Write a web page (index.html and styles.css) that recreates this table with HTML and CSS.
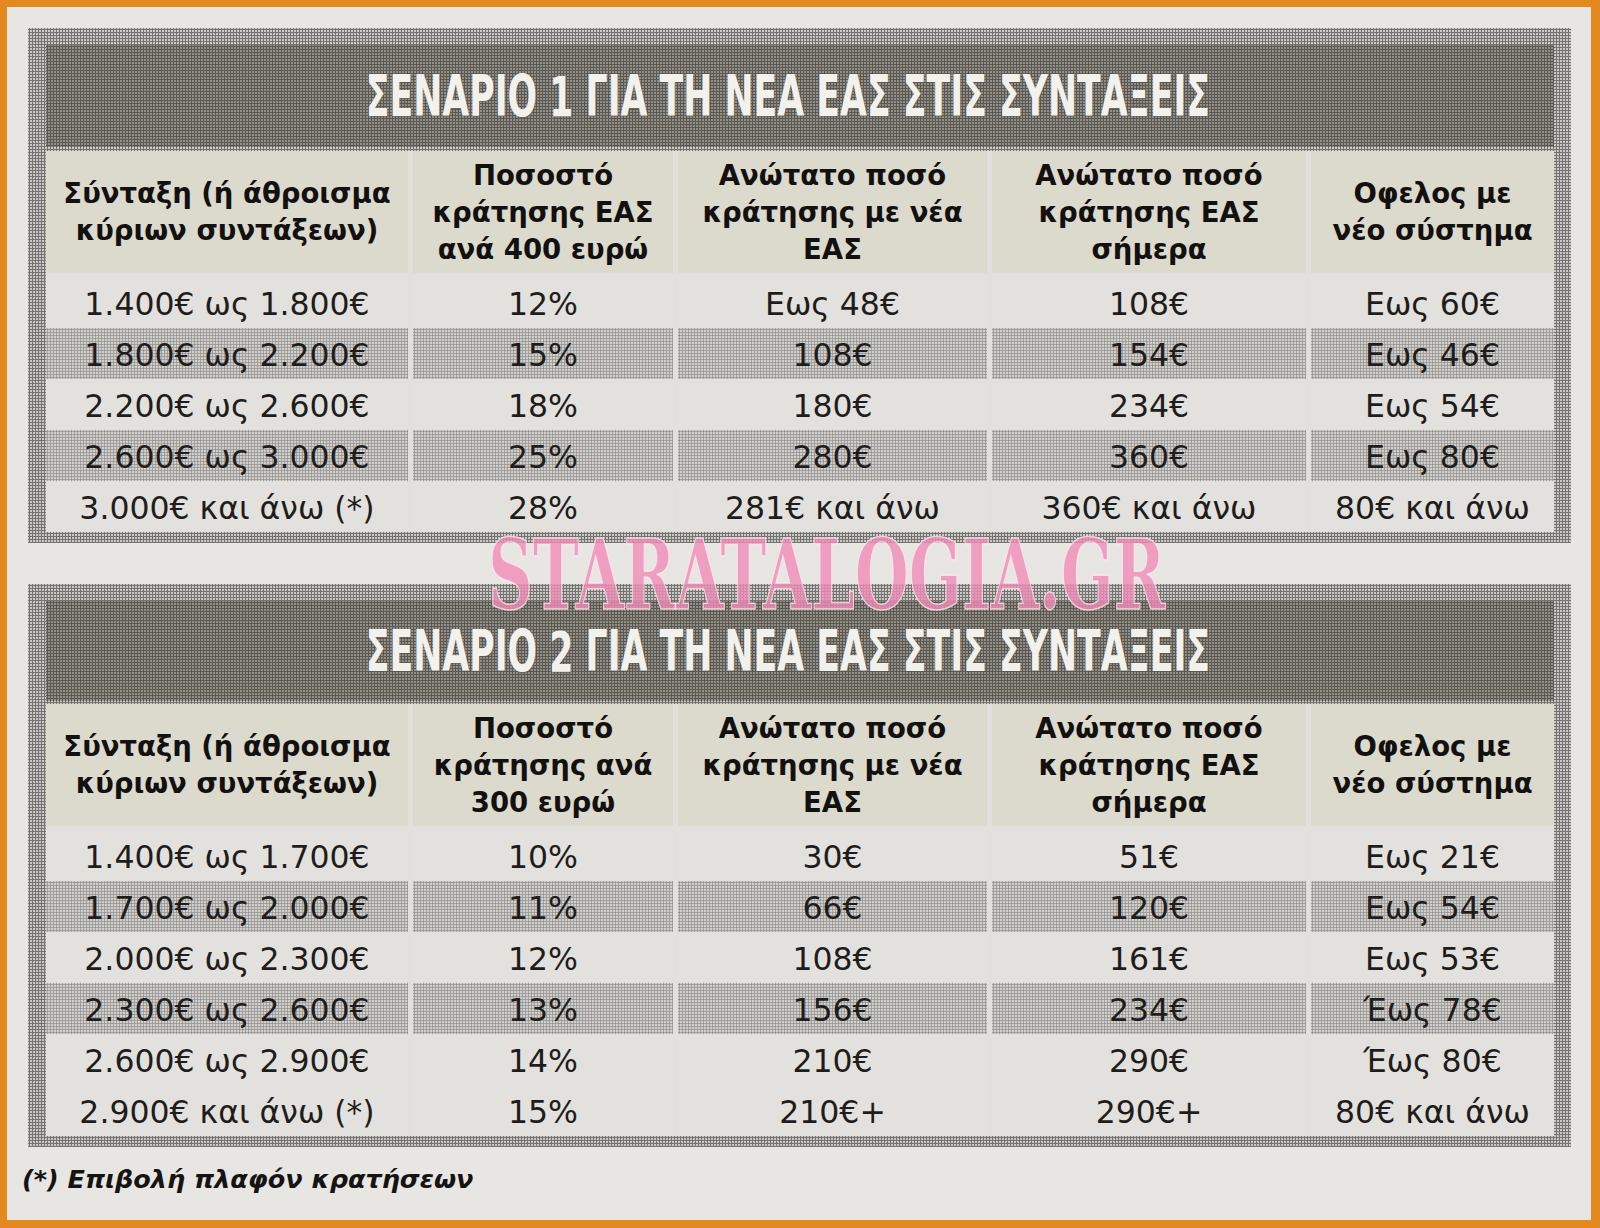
FILE: index.html
```html
<!DOCTYPE html>
<html lang="el">
<head>
<meta charset="utf-8">
<title>Σενάρια για τη νέα ΕΑΣ στις συντάξεις</title>
<link rel="stylesheet" href="styles.css">
</head>
<body>
<div class="page">
  <section class="scenario">
    <div class="title"><span class="title-text">ΣΕΝΑΡΙΟ 1 ΓΙΑ ΤΗ ΝΕΑ ΕΑΣ ΣΤΙΣ ΣΥΝΤΑΞΕΙΣ</span></div>
    <div class="row head">
      <div class="cell">Σύνταξη (ή άθροισμα<br>κύριων συντάξεων)</div>
      <div class="cell">Ποσοστό<br>κράτησης ΕΑΣ<br>ανά 400 ευρώ</div>
      <div class="cell">Ανώτατο ποσό<br>κράτησης με νέα<br>ΕΑΣ</div>
      <div class="cell">Ανώτατο ποσό<br>κράτησης ΕΑΣ<br>σήμερα</div>
      <div class="cell">Οφελος με<br>νέο σύστημα</div>
    </div>
    <div class="row light">
      <div class="cell">1.400€ ως 1.800€</div><div class="cell">12%</div><div class="cell">Εως 48€</div><div class="cell">108€</div><div class="cell">Εως 60€</div>
    </div>
    <div class="row dark">
      <div class="cell">1.800€ ως 2.200€</div><div class="cell">15%</div><div class="cell">108€</div><div class="cell">154€</div><div class="cell">Εως 46€</div>
    </div>
    <div class="row light">
      <div class="cell">2.200€ ως 2.600€</div><div class="cell">18%</div><div class="cell">180€</div><div class="cell">234€</div><div class="cell">Εως 54€</div>
    </div>
    <div class="row dark">
      <div class="cell">2.600€ ως 3.000€</div><div class="cell">25%</div><div class="cell">280€</div><div class="cell">360€</div><div class="cell">Εως 80€</div>
    </div>
    <div class="row light">
      <div class="cell">3.000€ και άνω (*)</div><div class="cell">28%</div><div class="cell">281€ και άνω</div><div class="cell">360€ και άνω</div><div class="cell">80€ και άνω</div>
    </div>
  </section>

  <section class="scenario second">
    <div class="title"><span class="title-text">ΣΕΝΑΡΙΟ 2 ΓΙΑ ΤΗ ΝΕΑ ΕΑΣ ΣΤΙΣ ΣΥΝΤΑΞΕΙΣ</span></div>
    <div class="row head">
      <div class="cell">Σύνταξη (ή άθροισμα<br>κύριων συντάξεων)</div>
      <div class="cell">Ποσοστό<br>κράτησης ανά<br>300 ευρώ</div>
      <div class="cell">Ανώτατο ποσό<br>κράτησης με νέα<br>ΕΑΣ</div>
      <div class="cell">Ανώτατο ποσό<br>κράτησης ΕΑΣ<br>σήμερα</div>
      <div class="cell">Οφελος με<br>νέο σύστημα</div>
    </div>
    <div class="row light">
      <div class="cell">1.400€ ως 1.700€</div><div class="cell">10%</div><div class="cell">30€</div><div class="cell">51€</div><div class="cell">Εως 21€</div>
    </div>
    <div class="row dark">
      <div class="cell">1.700€ ως 2.000€</div><div class="cell">11%</div><div class="cell">66€</div><div class="cell">120€</div><div class="cell">Εως 54€</div>
    </div>
    <div class="row light">
      <div class="cell">2.000€ ως 2.300€</div><div class="cell">12%</div><div class="cell">108€</div><div class="cell">161€</div><div class="cell">Εως 53€</div>
    </div>
    <div class="row dark">
      <div class="cell">2.300€ ως 2.600€</div><div class="cell">13%</div><div class="cell">156€</div><div class="cell">234€</div><div class="cell">Έως 78€</div>
    </div>
    <div class="row light">
      <div class="cell">2.600€ ως 2.900€</div><div class="cell">14%</div><div class="cell">210€</div><div class="cell">290€</div><div class="cell">Έως 80€</div>
    </div>
    <div class="row light">
      <div class="cell">2.900€ και άνω (*)</div><div class="cell">15%</div><div class="cell">210€+</div><div class="cell">290€+</div><div class="cell">80€ και άνω</div>
    </div>
  </section>

  <p class="note">(*) Επιβολή πλαφόν κρατήσεων</p>

  <div class="watermark">STARATALOGIA.GR</div>
</div>
</body>
</html>
```

FILE: styles.css
```css
html, body {
  margin: 0;
  padding: 0;
}

body {
  background: #e7e5e2;
}

.page {
  position: relative;
  width: 1600px;
  height: 1228px;
  box-sizing: border-box;
  border: 7px solid #e3891f;
  border-right-width: 9px;
  border-bottom-width: 8px;
  background: #e8e6e3;
  padding: 21px 20px 0 21px;
  overflow: hidden;
  font-family: "DejaVu Sans", "Noto Sans", sans-serif;
  color: #1e1d1c;
}

.scenario {
  padding: 17px 17px 11px 18px;
  background:
    radial-gradient(circle, rgba(60, 58, 56, 0.6) 1px, transparent 1.4px) 0 0 / 3px 3px,
    #cac8c5;
}

.scenario.second {
  margin-top: 41px;
}

.title {
  height: 102px;
  line-height: 104px;
  text-align: center;
  overflow: hidden;
  margin-bottom: 4px;
  background:
    radial-gradient(circle, rgba(35, 33, 28, 0.5) 1px, transparent 1.4px) 0 0 / 3px 3px,
    #928f88;
}

.second .title {
  height: 100px;
  line-height: 102px;
  margin-bottom: 3px;
}

.title-text {
  display: inline-block;
  font-family: "DejaVu Sans Condensed", "DejaVu Sans", sans-serif;
  font-weight: bold;
  font-size: 56px;
  color: #f3f1ec;
  white-space: nowrap;
  transform: translateX(-12px) scaleX(0.69);
  text-shadow: 1px 1px 0 rgba(90, 88, 84, 0.6);
}

.row {
  display: grid;
  grid-template-columns: 362px 260px 309px 314px 243px;
  column-gap: 5px;
  height: 51px;
  background: #e2e0dc;
}

.row .cell {
  display: flex;
  align-items: center;
  justify-content: center;
  text-align: center;
  font-size: 31.5px;
  padding-top: 2px;
  white-space: nowrap;
}

.row.head {
  height: 122px;
  border-bottom: 4px solid #e2e0dc;
}

.row.head .cell {
  background: #dcd9cd;
  font-weight: bold;
  font-size: 27.5px;
  line-height: 37px;
  padding-top: 0;
  color: #121110;
}

.row.light .cell {
  background: #e3e1dd;
}

.row.dark .cell {
  background:
    radial-gradient(circle, rgba(90, 88, 86, 0.5) 0.9px, transparent 1.3px) 0 0 / 3px 3px,
    #d1cfcc;
}

.note {
  margin: 17px 0 0 -6px;
  font-family: "DejaVu Sans", sans-serif;
  font-weight: bold;
  font-style: italic;
  font-size: 25.5px;
  color: #151413;
}

.watermark {
  position: absolute;
  left: 481px;
  top: 532px;
  font-family: "DejaVu Serif", "Liberation Serif", serif;
  font-weight: bold;
  font-size: 97px;
  line-height: 0.75;
  white-space: nowrap;
  color: rgba(240, 140, 182, 0.8);
  -webkit-text-stroke: 1.5px rgba(255, 235, 242, 0.75);
  transform-origin: left top;
  transform: scaleX(0.64);
}
```
